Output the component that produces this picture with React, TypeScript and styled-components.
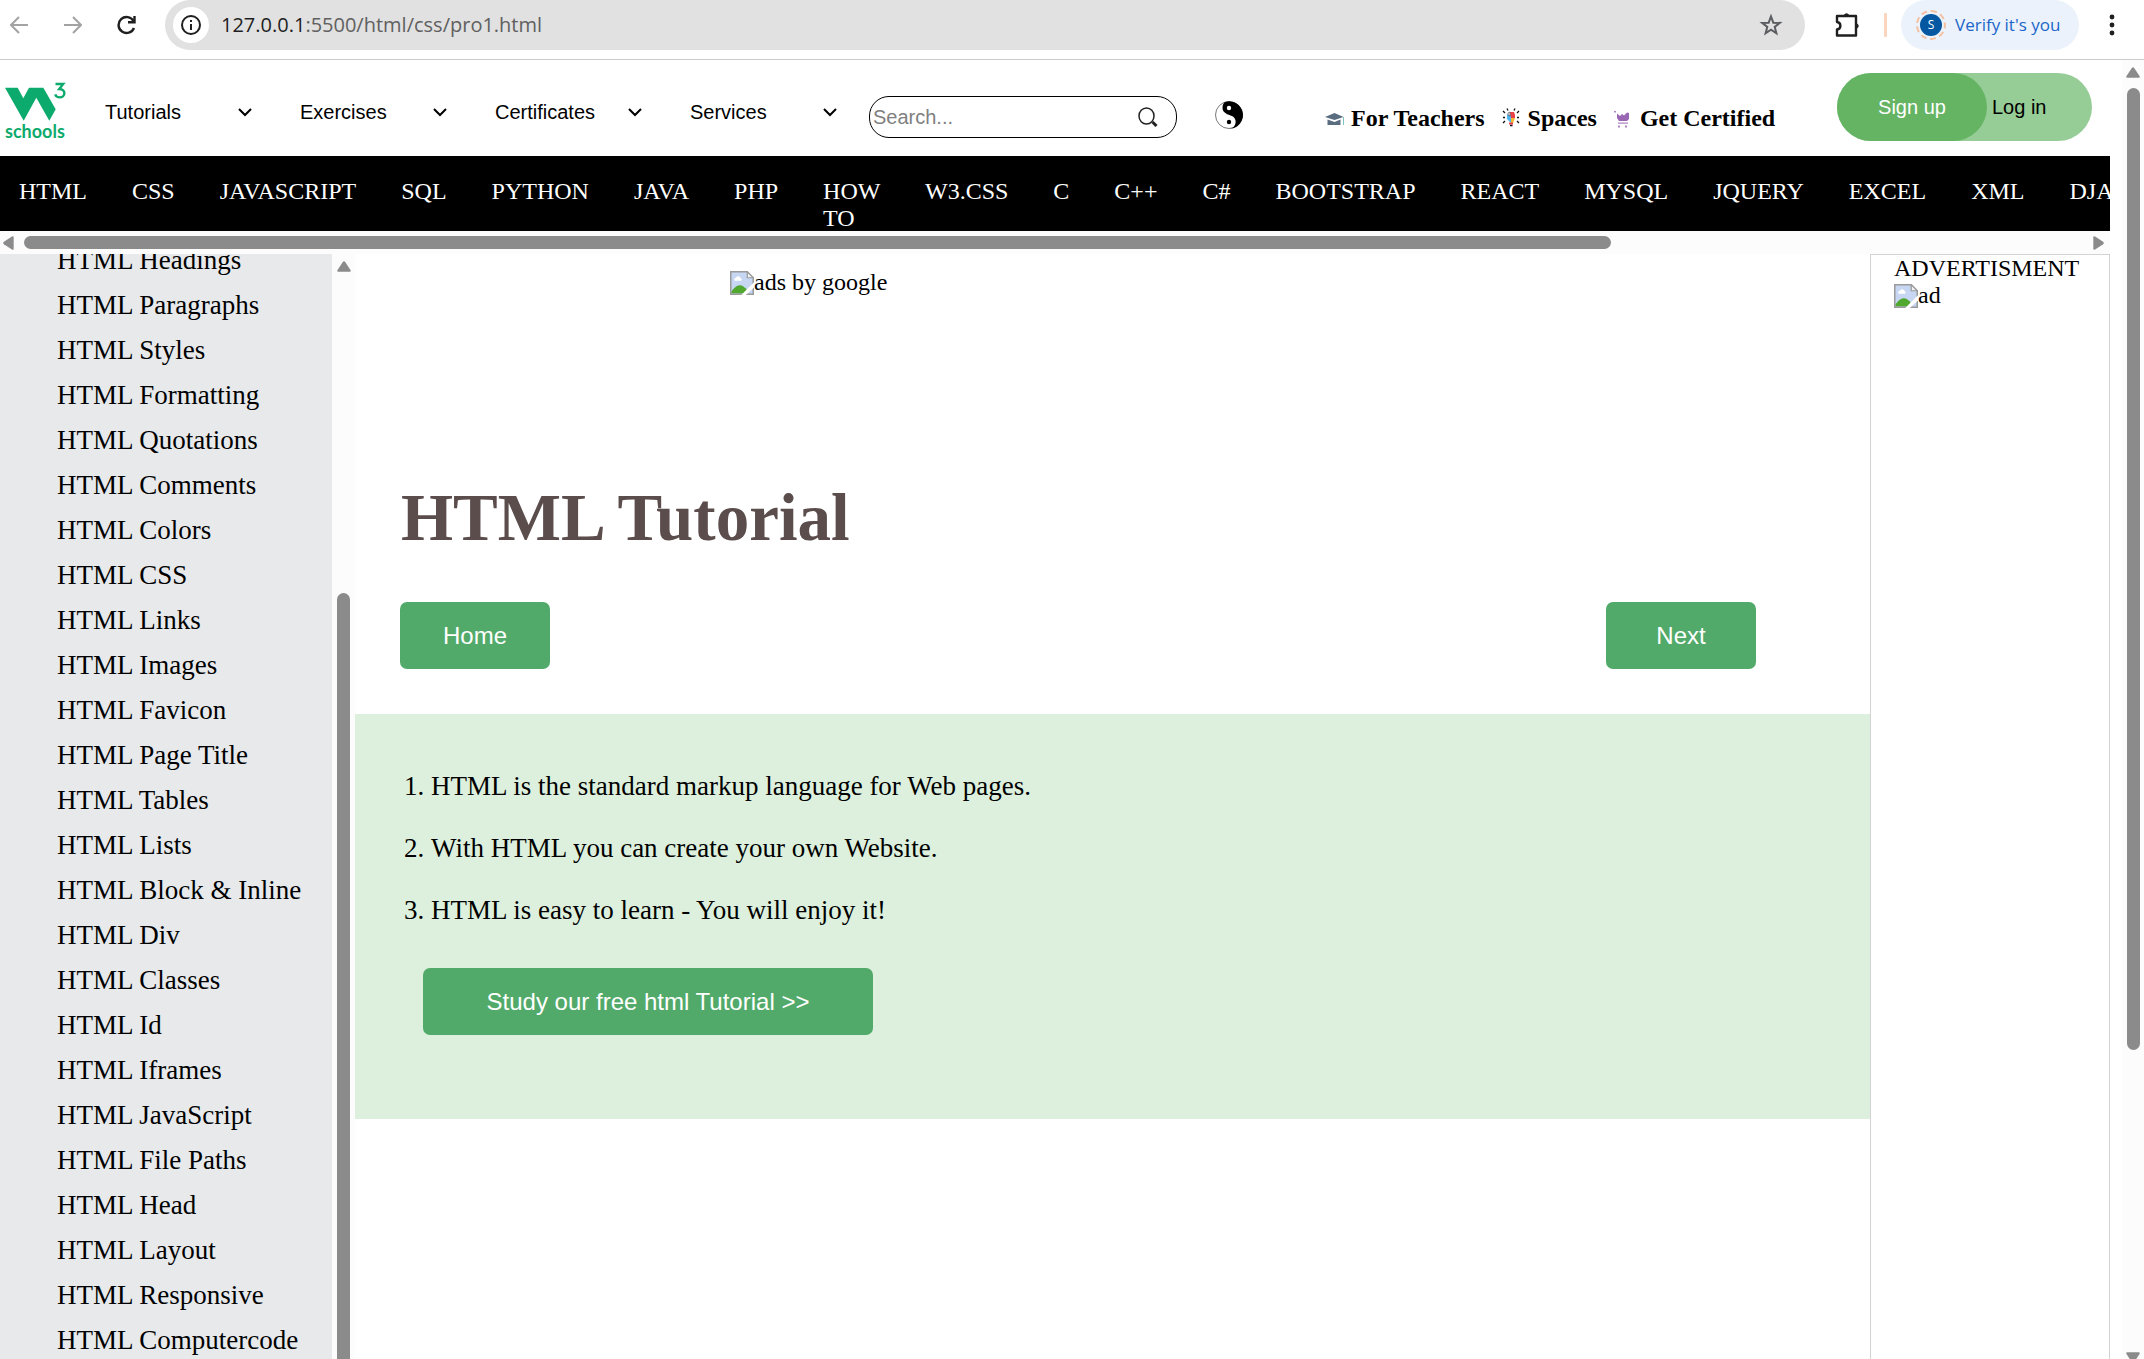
import React from "react";
import styled, { createGlobalStyle } from "styled-components";

const serif = `"Liberation Serif", "Times New Roman", serif`;
const sans = `"Liberation Sans", Arial, sans-serif`;
const ui = `"Open Sans", "Noto Sans", sans-serif`;
const thumbGrey = "#8b8b8b";

const Global = createGlobalStyle`
  *, *::before, *::after { box-sizing: border-box; }
  body { margin: 0; background: #fff; color: #000; font: 24px/27px ${serif}; }
  button, input, select { margin: 0; padding: 0; border: 0; background: none; }
  a { color: inherit; text-decoration: none; }
  svg { display: block; flex: none; }
`;

const Window = styled.div`
  display: flex;
  flex-direction: column;
  height: 100vh;
  overflow: hidden;
`;

/* ---------- browser toolbar ---------- */

const Toolbar = styled.div`
  display: flex;
  flex: none;
  align-items: flex-start;
  height: 60px;
  border-bottom: 1px solid #cbcbcb;
`;

const NavButtons = styled.div`
  display: flex;
  gap: 17px;
  margin-right: 20px;
`;

const ToolButton = styled.button<{ $muted?: boolean }>`
  display: flex;
  align-items: center;
  justify-content: center;
  width: 37px;
  height: 50px;
  color: ${(p) => (p.$muted ? "#a3a3a3" : "#1f1f1f")};
`;

const AddressBar = styled.div`
  display: flex;
  flex: 1;
  align-items: center;
  height: 50px;
  padding: 0 16px 0 8px;
  border-radius: 25px;
  background: #e1e1e1;
`;

const InfoButton = styled.button`
  display: flex;
  align-items: center;
  justify-content: center;
  width: 36px;
  height: 36px;
  border-radius: 18px;
  background: #fff;
`;

const Url = styled.a`
  flex: 1;
  margin-left: 12px;
  font: 20px/30px ${ui};
  color: #606060;
`;

const Host = styled.span`
  color: #1f1f1f;
`;

const Actions = styled.div`
  display: flex;
  align-items: center;
  padding: 0 14px 0 23px;
`;

const Divider = styled.span`
  width: 3px;
  height: 24px;
  margin: 0 14px 0 19px;
  border-radius: 1px;
  background: #fbd5c0;
`;

const Profile = styled.button`
  display: flex;
  align-items: center;
  gap: 9px;
  width: 178px;
  height: 50px;
  margin-right: 14px;
  padding-left: 15px;
  border-radius: 25px;
  background: #ebf2fb;
  color: #1b66c9;
  font: 17px/24px ${ui};
  white-space: nowrap;
`;

const Avatar = styled.span`
  display: flex;
  align-items: center;
  justify-content: center;
  width: 30px;
  height: 30px;
  border: 2px dashed #f3c0a2;
  border-radius: 15px;
`;

const AvatarDisc = styled.span`
  width: 22px;
  height: 22px;
  border-radius: 11px;
  background: #0457a0;
  color: #fff;
  font: 12px/22px ${ui};
  text-align: center;
`;

/* ---------- page frame ---------- */

const Viewport = styled.div`
  display: flex;
  flex: 1;
  min-height: 0;
`;

const Page = styled.div`
  display: flex;
  flex: 1;
  flex-direction: column;
  min-width: 0;
  padding-right: 12px;
`;

const VerticalBar = styled.div<{ $width: number; $overhang?: number }>`
  display: flex;
  flex: none;
  flex-direction: column;
  align-items: center;
  width: ${(p) => p.$width}px;
  margin-bottom: ${(p) => -(p.$overhang ?? 0)}px;
  padding-top: 7px;
  background: #fcfcfc;
`;

const Thumb = styled.div<{ $share: number; $gap: number; $open?: boolean }>`
  flex: ${(p) => p.$share};
  width: 13px;
  margin-top: ${(p) => p.$gap}px;
  border-radius: ${(p) => (p.$open ? "7px 7px 0 0" : "7px")};
  background: ${thumbGrey};
`;

const Rest = styled.div<{ $share: number }>`
  flex: ${(p) => p.$share};
`;

const HorizontalBar = styled.div`
  display: flex;
  flex: none;
  align-items: center;
  height: 23px;
  padding: 0 6px 0 3px;
  background: #fcfcfc;
`;

const WideThumb = styled.div`
  flex: 1587;
  height: 13px;
  margin-left: 10px;
  border-radius: 7px;
  background: ${thumbGrey};
`;

/* ---------- site header ---------- */

const Header = styled.header`
  display: flex;
  flex: none;
  align-items: flex-start;
  height: 96px;
  padding: 0 18px 0 5px;
`;

const Logo = styled.a`
  margin: 22px 38px 0 0;
`;

const Menus = styled.nav`
  display: flex;
  gap: 45px;
  margin: 32px 29px 0 0;
`;

const Menu = styled.label`
  display: grid;
  grid-template-columns: 133px 14px;
  align-items: center;
  width: 150px;
  height: 40px;

  select {
    grid-area: 1 / 1 / 2 / 3;
    height: 40px;
    appearance: none;
    font: 20px/24px ${sans};
    color: #000;
    outline: 0;
  }

  svg {
    grid-area: 1 / 2 / 2 / 3;
    pointer-events: none;
  }
`;

const Search = styled.form`
  display: flex;
  align-items: center;
  width: 308px;
  height: 42px;
  margin: 36px 38px 0 0;
  padding: 0 18px 0 3px;
  border: 1px solid #000;
  border-radius: 20px;

  input {
    flex: 1;
    min-width: 0;
    font: 20px/24px ${sans};
    outline: 0;
  }

  input::placeholder {
    color: #808080;
    opacity: 1;
  }
`;

const ThemeButton = styled.button`
  margin-top: 41px;
`;

const Extras = styled.nav`
  display: flex;
  gap: 17px;
  margin: 45px 0 0 82px;
  font-weight: bold;
  white-space: nowrap;
`;

const Extra = styled.a`
  display: flex;
  align-items: center;
  gap: 6px;
`;

const Account = styled.div`
  display: flex;
  width: 255px;
  height: 68px;
  margin: 13px 0 0 auto;
  border-radius: 34px;
  background: #96cd96;
`;

const AccountButton = styled.button<{ $primary?: boolean }>`
  width: ${(p) => (p.$primary ? "150px" : "auto")};
  padding-left: ${(p) => (p.$primary ? 0 : 5)}px;
  border-radius: 34px;
  background: ${(p) => (p.$primary ? "#64b464" : "none")};
  color: ${(p) => (p.$primary ? "#fff" : "#000")};
  font: 20px/24px ${sans};
`;

const Topics = styled.nav`
  display: flex;
  flex: none;
  gap: 45px;
  height: 75px;
  padding: 22px 0 0 19px;
  overflow: hidden;
  background: #000;
  color: #fff;
`;

/* ---------- content ---------- */

const Columns = styled.div`
  display: flex;
  flex: 1;
  min-height: 0;
`;

const Sidebar = styled.aside`
  width: 332px;
  overflow: hidden;
  background: #e7e9eb;
`;

const Chapters = styled.ul`
  margin: -16px 0 0;
  padding: 0 0 0 57px;
  list-style: none;
  font-size: 27px;
  line-height: 45px;
`;

const Main = styled.main`
  flex: 1;
  min-width: 0;
`;

const Banner = styled.div`
  display: flex;
  justify-content: flex-start;
  height: 221px;
  padding: 15px 0 0 375px;
`;

const Missing = styled.span`
  display: flex;
  align-items: center;
  height: 27px;
`;

const Title = styled.h1`
  margin: 0 0 42px;
  padding-left: 46px;
  color: #5c4d4d;
  font-size: 67px;
  line-height: 85px;
`;

const Pager = styled.div`
  display: flex;
  justify-content: space-between;
  padding: 0 114px 45px 45px;
`;

const GreenButton = styled.button<{ $wide?: boolean }>`
  width: ${(p) => (p.$wide ? 450 : 150)}px;
  height: 67px;
  border-radius: 7px;
  background: #52aa6a;
  color: #fff;
  font: 24px/28px ${sans};
`;

const Intro = styled.section`
  padding: 41px 68px 84px;
  background: #ddf0dd;
`;

const Facts = styled.ol`
  margin: 0 0 27px;
  padding-left: 8px;
  font-size: 27px;
  line-height: 62px;
`;

const Ad = styled.aside`
  flex: none;
  width: 240px;
  padding-left: 23px;
  border: 1px solid #d3d3d3;
  border-bottom: 0;
`;

/* ---------- drawings ---------- */

const Triangle = ({ dir }: { dir: "up" | "down" | "left" | "right" }) => {
  const turn = { up: 0, right: 90, down: 180, left: 270 }[dir];
  const upright = dir === "up" || dir === "down";
  return (
    <svg width={upright ? 14 : 11} height={upright ? 11 : 14} viewBox={upright ? "-7 -5.5 14 11" : "-5.5 -7 11 14"}>
      <path
        d="M-1.2-4.6Q0-6 1.2-4.6L6.5 3.4Q7.4 5.2 5.6 5.2H-5.6Q-7.4 5.2-6.5 3.4Z"
        fill={thumbGrey}
        transform={`rotate(${turn})`}
      />
    </svg>
  );
};

const Arrow = ({ flip }: { flip?: boolean }) => (
  <svg width="18" height="18" viewBox="0 0 18 18" fill="none" stroke="currentColor" strokeWidth="2">
    <path d={flip ? "M0 9H17M9 1L17 9L9 17" : "M18 9H1M9 1L1 9L9 17"} />
  </svg>
);

const Chevron = () => (
  <svg width="14" height="14" viewBox="0 0 14 14" fill="none" stroke="#000" strokeWidth="2">
    <path d="M1 4L7 10L13 4" />
  </svg>
);

const BrokenImage = () => (
  <svg width="24" height="24" viewBox="0 0 16 16" aria-hidden="true">
    <path d="M.5.5H11.500L15.500 4.500V15.500H.5Z" fill="#c6d6f3" />
    <path d="M3 6.500a1.300 1.300 0 0 1 1-2 1.600 1.600 0 0 1 3 .2 1 1 0 0 1 .4 1.800Z" fill="#fff" />
    <path d="M1 15V13.500C4 9.500 6.500 9 8.500 10L11 12V15Z" fill="#50a82f" />
    <path d="M.5 15.500V.5H11.500L15.500 4.500V15.500Z" fill="none" stroke="#9a9a9a" />
    <path d="M11.500.5V4.500H15.500Z" fill="#f4f4f4" stroke="#9a9a9a" strokeWidth=".8" />
    <path d="M16 7.500L7.500 16H10.500L16 11Z" fill="#fff" />
  </svg>
);

const LogoMark = () => (
  <svg width="62" height="62" viewBox="0 0 62 62">
    <path
      d="M0 5.700H12.700L18.300 16.300L24 5.700H38.300L50.700 27.300L44.300 38.700L31.300 15.700L18.700 38.700Z"
      fill="#0daa6d"
    />
    <path d="M50.500 2H58.200L54.200 7C61.500 7.200 60.500 15.400 54.700 15.400C52.200 15.400 50.800 14.200 50.200 12.400" fill="none" stroke="#0daa6d" strokeWidth="2.400" />
    <text x="0" y="56" fontFamily="Lato, sans-serif" fontSize="18" fontWeight="700" fill="#0daa6d">
      schools
    </text>
  </svg>
);

const YinYang = () => (
  <svg width="28" height="28" viewBox="0 0 28 28">
    <circle cx="14" cy="14" r="13.500" fill="#fff" stroke="#555" strokeWidth=".8" />
    <path d="M10 1A13.700 13.700 0 1 1 15 27.700A6.800 6.800 0 0 0 17 15C13 13.500 7.500 12 7.500 7C7.500 4 8.500 2 10 1Z" fill="#000" />
    <circle cx="14" cy="7" r="2.200" fill="#fff" />
    <circle cx="14" cy="21" r="2.200" fill="#000" />
  </svg>
);

const Cap = () => (
  <svg width="20" height="16" viewBox="0 0 20 16">
    <path d="M0 6L9.500 2L18.500 6L9.500 9Z" fill="#5a6c80" />
    <path d="M2.500 8.500L9.500 11L15.500 8.500V14H2.500Z" fill="#5a6c80" />
    <path d="M18.500 6V14" stroke="#7ec5bd" />
  </svg>
);

const Bulb = () => (
  <svg width="20" height="24" viewBox="0 0 20 24">
    <path d="M5 8L7 6L9 8V16L7 14L5 12Z" fill="#4fb4f0" />
    <path d="M8 5H12L13 8V11H9Z" fill="#e8414a" />
    <path d="M9 11H13L11 16H9Z" fill="#f8b72c" />
    <path d="M6 6L8 5V9L6 8Z" fill="#fff" stroke="#333" strokeWidth=".6" />
    <path d="M7 15.500H11V17.500H7Z" fill="#e8414a" />
    <path d="M8 18.500H10.500M1 4L3 6M5 1.500L6 3.500M12 3.500L13 1.500M15 6L17 4M1 10.500H3M15 10.500H17M1 16L3 14M15 14L17 16" stroke="#111" strokeWidth="1.300" />
  </svg>
);

const Cart = () => (
  <svg width="20" height="22" viewBox="0 0 20 22" fill="#9a67b5">
    <path d="M3 5.500L6 8L8 6L10 7.500L13 4.500L15 5V11L13 13H5L3 10Z" />
    <path d="M0 3H2V4.500H0ZM4 14.500H14V15.700H4ZM4 17.500H6V19.500H4ZM11 17.500H13V19.500H11Z" opacity=".8" />
  </svg>
);

/* ---------- data ---------- */

const menus = ["Tutorials", "Exercises", "Certificates", "Services"];

const topics = [
  "HTML", "CSS", "JAVASCRIPT", "SQL", "PYTHON", "JAVA", "PHP", "HOW TO", "W3.CSS", "C", "C++", "C#",
  "BOOTSTRAP", "REACT", "MYSQL", "JQUERY", "EXCEL", "XML", "DJANGO",
];

const chapters = [
  "Headings", "Paragraphs", "Styles", "Formatting", "Quotations", "Comments", "Colors", "CSS", "Links",
  "Images", "Favicon", "Page Title", "Tables", "Lists", "Block & Inline", "Div", "Classes", "Id", "Iframes",
  "JavaScript", "File Paths", "Head", "Layout", "Responsive", "Computercode",
];

const facts = [
  "HTML is the standard markup language for Web pages.",
  "With HTML you can create your own Website.",
  "HTML is easy to learn - You will enjoy it!",
];

export default function App() {
  return (
    <Window>
      <Global />
      <Toolbar>
        <NavButtons>
          <ToolButton $muted aria-label="Back"><Arrow /></ToolButton>
          <ToolButton $muted aria-label="Forward"><Arrow flip /></ToolButton>
          <ToolButton aria-label="Reload">
            <svg width="20" height="20" viewBox="0 0 20 20" fill="none" stroke="currentColor" strokeWidth="2.400">
              <path d="M17 13A8 8 0 1 1 16.500 6L17 7" />
              <path d="M17.500 1V7.300H11" />
            </svg>
          </ToolButton>
        </NavButtons>
        <AddressBar>
          <InfoButton aria-label="Site information">
            <svg width="20" height="20" viewBox="0 0 20 20" fill="none" stroke="#1f1f1f" strokeWidth="2">
              <circle cx="10" cy="10" r="9" />
              <path d="M10 9V15M10 5V7" />
            </svg>
          </InfoButton>
          <Url href="#"><Host>127.0.0.1</Host>:5500/html/css/pro1.html</Url>
          <ToolButton aria-label="Bookmark">
            <svg width="24" height="24" viewBox="0 0 24 24" fill="none" stroke="#5a5d61" strokeWidth="2">
              <path d="M12 3.500L14.300 9.700L20.800 9.900L15.700 13.900L17.400 20.300L12 16.700L6.600 20.300L8.300 13.900L3.200 9.900L9.700 9.700Z" />
            </svg>
          </ToolButton>
        </AddressBar>
        <Actions>
          <ToolButton aria-label="Extensions">
            <svg width="26" height="26" viewBox="0 0 26 26" fill="none" stroke="#1f1f1f" strokeWidth="2.400" strokeLinejoin="round">
              <path d="M3 4H22V23.500H3V17.500C7.500 17 7.500 10.500 3 10Z" />
              <path d="M10 3.500A2.700 2.700 0 0 1 15 3.500ZM22.500 11.500A2.700 2.700 0 0 1 22.500 16.500Z" fill="#1f1f1f" strokeWidth="1" />
            </svg>
          </ToolButton>
          <Divider />
          <Profile>
            <Avatar><AvatarDisc>S</AvatarDisc></Avatar>
            Verify it's you
          </Profile>
          <ToolButton aria-label="More">
            <svg width="6" height="24" viewBox="0 0 6 24" fill="#1f1f1f">
              <circle cx="3" cy="4" r="2.400" />
              <circle cx="3" cy="12" r="2.400" />
              <circle cx="3" cy="20" r="2.400" />
            </svg>
          </ToolButton>
        </Actions>
      </Toolbar>

      <Viewport>
        <Page>
          <Header>
            <Logo href="#" aria-label="Home page"><LogoMark /></Logo>
            <Menus>
              {menus.map((name) => (
                <Menu key={name}>
                  <select aria-label={name}>
                    <option>{name}</option>
                  </select>
                  <Chevron />
                </Menu>
              ))}
            </Menus>
            <Search>
              <input type="text" placeholder="Search..." aria-label="Search" />
              <button type="button" aria-label="Go">
                <svg width="20" height="20" viewBox="0 0 20 20" fill="none" stroke="#222">
                  <ellipse cx="8.500" cy="9" rx="7.500" ry="8" strokeWidth="1.500" />
                  <path d="M14.500 15L18.500 19" strokeWidth="3" />
                </svg>
              </button>
            </Search>
            <ThemeButton aria-label="Toggle theme"><YinYang /></ThemeButton>
            <Extras>
              <Extra href="#"><Cap />For Teachers</Extra>
              <Extra href="#"><Bulb />Spaces</Extra>
              <Extra href="#"><Cart />Get Certified</Extra>
            </Extras>
            <Account>
              <AccountButton $primary>Sign up</AccountButton>
              <AccountButton>Log in</AccountButton>
            </Account>
          </Header>

          <Topics>
            {topics.map((t) => <a href="#" key={t}>{t}</a>)}
          </Topics>
          <HorizontalBar>
            <Triangle dir="left" />
            <WideThumb />
            <Rest $share={482} />
            <Triangle dir="right" />
          </HorizontalBar>

          <Columns>
            <Sidebar>
              <Chapters>
                {chapters.map((c) => <li key={c}><a href="#">HTML {c}</a></li>)}
              </Chapters>
            </Sidebar>
            <VerticalBar $width={23}>
              <Triangle dir="up" />
              <Thumb $share={1} $gap={321} $open />
            </VerticalBar>
            <Main>
              <Banner><Missing><BrokenImage />ads by google</Missing></Banner>
              <Title>HTML Tutorial</Title>
              <Pager>
                <GreenButton>Home</GreenButton>
                <GreenButton>Next</GreenButton>
              </Pager>
              <Intro>
                <Facts>
                  {facts.map((f) => <li key={f}>{f}</li>)}
                </Facts>
                <GreenButton $wide>Study our free html Tutorial &gt;&gt;</GreenButton>
              </Intro>
            </Main>
            <Ad>
              <div>ADVERTISMENT</div>
              <Missing><BrokenImage />ad</Missing>
            </Ad>
          </Columns>
        </Page>
        <VerticalBar $width={22} $overhang={4}>
          <Triangle dir="up" />
          <Thumb $share={962} $gap={10} />
          <Rest $share={302} />
          <Triangle dir="down" />
        </VerticalBar>
      </Viewport>
    </Window>
  );
}
